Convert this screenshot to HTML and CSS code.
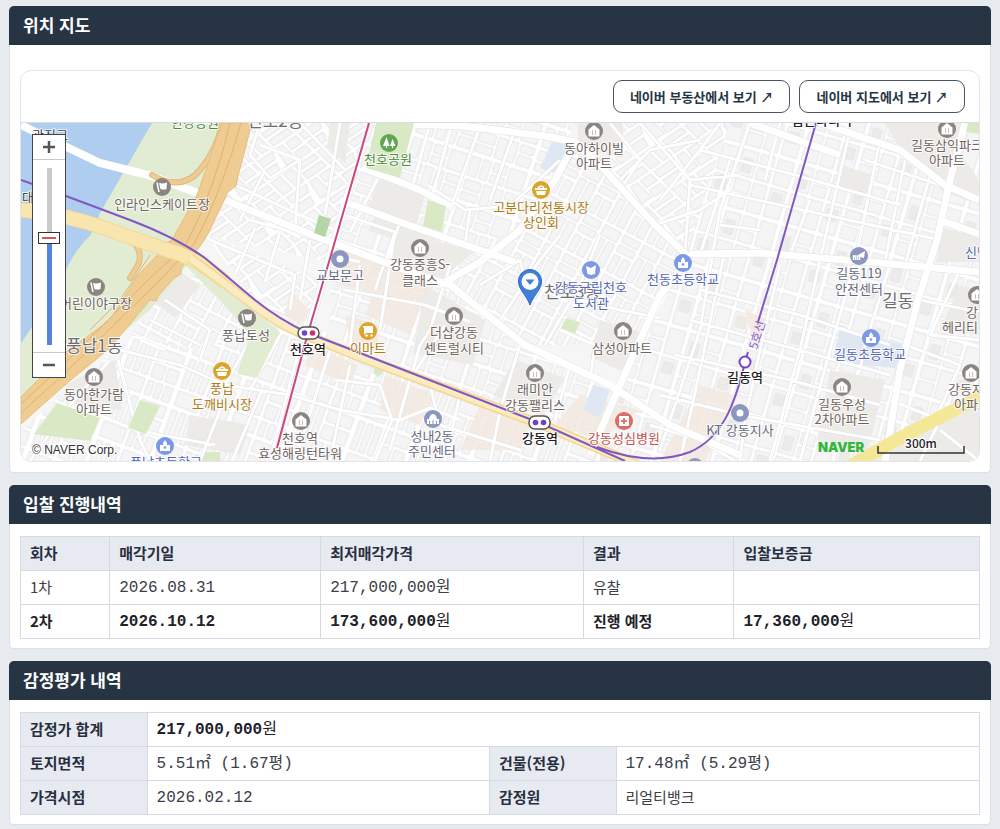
FILE: index.html
```html
<!DOCTYPE html>
<html lang="ko">
<head>
<meta charset="utf-8">
<meta name="viewport" content="width=device-width, initial-scale=1">
<title>위치 지도</title>
<link rel="stylesheet" href="styles.css">
</head>
<body>
<main class="page">
  <section class="panel">
    <h2 class="panel-title">위치 지도</h2>
    <div class="panel-body panel-body-map">
      <div class="map-card">
        <div class="map-bar">
          <a class="map-link" href="#land">네이버 부동산에서 보기 ↗</a>
          <a class="map-link" href="#map">네이버 지도에서 보기 ↗</a>
        </div>
        <div class="map">
          <svg class="map-canvas" viewBox="21 123 958 338" preserveAspectRatio="xMidYMid slice" role="img" aria-label="천호동 주변 지도">
            <defs>
              <pattern id="lots-a" width="62" height="50" patternUnits="userSpaceOnUse" patternTransform="rotate(18)">
                <rect class="gap" width="62" height="50"/>
                <g class="lot"><path d="M2 2h9v20H2zM14 2h8v20h-8zM25 2h14v9H25zM25 14h14v8H25zM42 2h17v20H42zM2 26h17v10H2zM2 39h17v8H2zM22 26h9v21h-9zM34 26h8v21h-8zM45 26h14v8H45zM45 37h14v10H45z"/></g>
              </pattern>
              <pattern id="lots-b" width="58" height="64" patternUnits="userSpaceOnUse" patternTransform="rotate(16)">
                <rect class="gap" width="58" height="64"/>
                <g class="lot"><path d="M2 2h16v26H2zM21 2h14v12H21zM21 17h14v11H21zM39 2h16v26H39zM2 32h16v13H2zM2 48h16v13H2zM21 32h14v29H21zM39 32h16v29H39z"/><path class="lot-dark" d="M5 10h9v14H5zM42 36h10v11H42z"/></g>
              </pattern>
              <pattern id="lots-c" width="56" height="46" patternUnits="userSpaceOnUse" patternTransform="rotate(-34) skewX(12)">
                <rect class="gap" width="56" height="46"/>
                <g class="lot"><path d="M2 2h24l-4 8H2zM2 14h18l-3 9H2zM30 2h8v20H26zM42 2h12v9H41zM41 15h13v8H40zM2 27h11v17H2zM17 27h10v17H17zM31 27h23v6H31zM31 37h23v7H31z"/></g>
              </pattern>
              <pattern id="lots-d" width="44" height="44" patternUnits="userSpaceOnUse" patternTransform="rotate(-62)">
                <rect class="gap" width="44" height="44"/>
                <g class="lot"><path d="M2 2h18v7H2zM2 12h18v8H2zM24 2h7v18h-7zM34 2h8v18h-8zM2 24h26v7H2zM2 34h26v8H2zM31 24h11v18H31z"/></g>
              </pattern>
              <pattern id="lots-e" width="60" height="54" patternUnits="userSpaceOnUse" patternTransform="rotate(20)">
                <rect class="gap" width="60" height="54"/>
                <g class="lot"><path d="M2 2h6v30H2zM11 2h6v30h-6zM20 2h6v30h-6zM30 2h26v12H30zM30 18h12v14H30zM45 18h11v14H45zM2 36h24v15H2zM30 36h6v15h-6zM39 36h6v15h-6zM48 36h8v15h-8z"/></g>
              </pattern>
              <symbol id="i-home" viewBox="-10 -10 20 20"><circle r="9"/><path class="ic-w" d="M-5.500-1.500 0-6 5.500-1.500V5.500H-5.500z"/><path class="ic-k" d="M-1.500-1v5M1.500-1v5"/></symbol>
              <symbol id="i-flag" viewBox="-10 -10 20 20"><circle r="9"/><path class="ic-l" d="M-5-4.500 -3 5"/><path class="ic-w" d="M-3-4Q1-3 5-4.500L4.500 2Q1 3-1.500 2z"/></symbol>
              <symbol id="i-basket" viewBox="-10 -10 20 20"><circle r="9"/><path class="ic-l" d="M-3.500-1Q0-7 3.500-1"/><path class="ic-w" d="M-6-2H6V0H-6zM-5 1H5L4 5H-4z"/></symbol>
              <symbol id="i-tree" viewBox="-10 -10 20 20"><circle r="9"/><path class="ic-w" d="M-2.500-6-6 3h3v2h1V3H.5zM3.500-4 1 3h2v2h1V3h2.500z"/></symbol>
              <symbol id="i-book" viewBox="-10 -10 20 20"><circle r="9"/><path class="ic-w" d="M-5-4 0-2 5-5 4 4 0 5-3.500 4z"/></symbol>
              <symbol id="i-school" viewBox="-10 -10 20 20"><circle r="9"/><path class="ic-w" d="M0-6 2-3V-1H5V5H-5V-1H-2V-3z"/><circle r="1.300" cy="1.500"/></symbol>
              <symbol id="i-cart" viewBox="-10 -10 20 20"><circle r="9"/><path class="ic-w" d="M-5-5H5V2H-2L-4 4V-3.500H-5z"/><circle class="ic-w" cx="-1.500" cy="4.500" r="1.200"/><circle class="ic-w" cx="3.500" cy="4.500" r="1.200"/></symbol>
              <symbol id="i-dot" viewBox="-10 -10 20 20"><circle r="9"/><circle class="ic-w" r="3.500"/></symbol>
              <symbol id="i-cross" viewBox="-10 -10 20 20"><circle r="9"/><rect class="ic-w" x="-5" y="-5" width="10" height="10" rx="1"/><path class="ic-x" d="M0-3V3M-3 0H3"/></symbol>
              <symbol id="i-office" viewBox="-10 -10 20 20"><circle r="9"/><path class="ic-w" d="M-6 5V0H-4Q-3-5 0-5T4 0H6V5z"/><path class="ic-o" d="M-3.500 2v3M0 1v4M3.500 2v3"/></symbol>
              <symbol id="i-fire" viewBox="-10 -10 20 20"><circle r="9"/><path class="ic-l" d="M-5.500 4V0H-3.500V4M-1.500 4V0H.5V4"/><path class="ic-w" d="M-1-1 6-5 5 2 1 1z"/></symbol>
            </defs>

            <rect class="ground" x="21" y="123" width="958" height="338"/>

            <!-- street blocks -->
            <path fill="url(#lots-c)" d="M250 123H372L330 262 205 235z"/>
            <path fill="url(#lots-a)" d="M369 123H575L530 225 440 270 332 250z"/>
            <path fill="url(#lots-c)" d="M570 123H760L700 262 655 232z"/>
            <path fill="url(#lots-d)" d="M575 145 690 255 640 345 520 345 440 270 530 220z"/>
            <path fill="url(#lots-b)" d="M730 123H979V461H590L685 255z"/>
            <path fill="url(#lots-e)" d="M205 262 330 335 600 450V461H60L120 350z"/>
            <path fill="url(#lots-d)" d="M181 272 240 310 250 335 200 350 130 335z"/>
            <path fill="url(#lots-e)" d="M21 430 110 355 160 400 190 461H21z"/>
            <path fill="url(#lots-a)" d="M332 250 440 270 525 345 610 385 590 445 330 335z"/>
            <path fill="url(#lots-c)" d="M205 235 320 280 308 325 250 295z"/>

            <!-- land use -->
            <g class="lot-dark">
              <path d="M330 123h20l-5 40-18-16zM380 178l45 16-8 30-50-14zM375 215l62 22-8 12-60-18zM396 228l78 24-34 28-54-15z"/>
              <path d="M578 123h45v35l-45-12zM885 123h78l-16 60-50-40z"/>
              <path d="M955 145 979 180V205L940 190zM944 228 979 237V262H936zM844 166l30 9-5 18-30-7z"/>
              <path d="M425 285l60 35-12 45-60-12zM515 360l50 18-22 38-50-20zM600 320l40 12-16 40-34-15z"/>
              <path d="M170 265 200 285 175 318 152 300zM65 385 115 360 122 410 75 405zM190 415 250 425 240 455 185 445z"/>
              <path d="M830 370l55 10-18 75-50-15zM960 285 979 290V335L940 330zM908 425 979 392V461H870z"/>
            </g>
            <g class="lot-peach">
              <path d="M290 292 310 310 300 325 285 315zM345 248 405 270 395 300 340 285zM345 315 378 325 378 355 350 345z"/>
              <path d="M310 345 358 365 350 385 305 365zM385 265l45 20-20 50-45-20zM385 375 435 395 420 425 380 410zM580 395 640 410 600 440 555 425z"/>
              <path d="M700 385 735 395 705 461H660zM745 310 770 320 755 350zM480 405 530 425 520 450H460z"/>
            </g>
            <path class="lot-blue" d="M552 142 580 145 562 175 540 168zM593 385 610 390 600 418 583 410zM840 328 905 345 895 368 832 362z"/>

            <!-- streets -->
            <g class="street-edge">
              <path id="streets" d="M235 185 300 215 340 232M225 200 300 238M260 123 250 155 270 178 300 160 260 145M265 170 240 220M300 160 295 230M250 220 320 240M300 123 345 170M340 123 325 215M210 240 295 275 290 310M255 228 235 275M280 232 265 282M310 240 300 300M330 255 360 262M345 215 395 232 375 290M355 205 380 213M378 178 350 232M412 123 390 180M430 123 412 188M452 123 430 205M480 126 450 210M515 130 490 200M400 222 385 265M428 185 465 210 510 206 560 160M470 210 465 245 490 250M450 265 430 330 420 345M395 232 380 330M345 290 425 305 470 322M350 345 360 265M420 345 390 450M445 325 415 372M520 345 500 410M500 320 540 260 560 235M545 345 580 285 600 235M580 300 620 310 660 318M560 330 595 345 590 380M480 285 520 260 530 300M620 385 570 365M570 365 555 420M610 123 640 160 620 190M640 123 690 180 740 175M660 200 700 150 720 123M655 225 700 210 730 190M690 180 685 255M620 180 650 150 700 140M730 160 700 255M750 123 720 210 700 330 660 450M780 123 765 180M700 150 795 175 900 205M690 185 780 205 940 240M720 225 760 230M700 290 800 315 890 345M690 320 780 345 890 375M675 355 790 380 880 405M660 395 740 415 880 440M650 425 700 440 735 461M725 250 700 370 680 461M780 265 760 350 745 420 740 461M820 260 800 350 770 461M855 262 830 350 800 461M890 265 865 345 860 370M810 200 790 255M850 130 820 260M880 140 855 262M905 160 885 262M930 175 905 265M865 160 940 185M875 215 840 205M960 270 930 335 979 340M920 300 979 312M905 345 960 365 935 420M890 400 940 420 920 461M940 430 979 461M120 350 180 365 225 385 290 395M118 360 140 440 150 461M110 360 70 405 30 461M140 340 165 350M150 320 200 345M165 300 210 330 200 360M75 405 135 430 215 445M230 385 200 461M262 390 232 461M250 340 225 385M280 335 250 390M300 345 270 461M330 350 295 461M350 365 330 461M290 395 340 410 400 420 430 408 460 420M335 380 380 385 392 420 375 461M430 385 440 425 520 450M460 395 445 461M500 412 490 461"/>
            </g>
            <use class="street" href="#streets"/>
            <g class="road-edge">
              <path id="roads" d="M405 124 463 126 545 136 575 142 600 165 655 225 690 258M575 142 555 180 520 230 480 262 440 285M362 168 390 178 420 190 450 206M340 200 400 222 480 250 515 262M225 200 320 238 400 268 450 285 525 345 610 385 670 425 740 455M690 258 660 295 640 340 620 385 590 455M690 254 760 253 870 262 979 272M965 123 950 180 937 240 918 300 900 370 885 461M750 123 840 155M820 123 900 150 945 185 979 200M940 220 979 234M352 180 310 325"/>
            </g>
            <use class="road" href="#roads"/>

            <!-- river, banks and parks -->
            <path class="bank" d="M21 420V123H245L205 240 190 262 150 310 66 380z"/>
            <path class="water" d="M21 123H152L100 213 92 234Q76 248 66 270L50 300 30 330 21 343z"/>
            <path class="bank" d="M100 226Q88 232 91 238L105 242 115 232z"/>
            <path class="bank" d="M184 264 205 264 236 294 280 332 257 378 237 374 250 335 227 308z"/>
            <path class="park-soft" d="M376 123H414L400 178 366 168zM428 200 446 206 442 232 423 226z"/>
            <path class="park" d="M319 215 331 219 325 237 314 233z"/>
            <path class="park-soft" d="M57 403 100 418 90 441 34 434zM140 400 160 406 146 434 128 428zM566 318l14 4-5 12-14-6zM968 123H979V134L966 132zM375 365l10 4-6 8-6-4zM205 452h15v9h-18z"/>

            <!-- expressway -->
            <path class="bridge" d="M21 125 100 163 152 176 200 194"/>
            <path class="ramp-edge" d="M152 175Q182 192 200 170T222 123M118 230Q150 258 178 240M125 235Q145 248 138 265L130 278"/>
            <path class="ramp" d="M152 175Q182 192 200 170T222 123M118 230Q150 258 178 240M125 235Q145 248 138 265L130 278"/>
            <path class="express" d="M222 123H252L238 176 236 186 228 192 208 234 200 246 181 268 181 274 174 278 158 296 156 301 150 300 110 348 66 384 21 424V397L66 352 110 320 138 275 172 240 197 195z"/>
            <path class="express-line" d="M230 123Q215 190 185 246L150 278 66 362 21 404M241 123Q222 192 194 244L160 280 66 372 21 413M150 255 120 300 90 330"/>

            <!-- arterial roads -->
            <path class="artery-edge" d="M21 210Q66 214 110 230T180 254Q205 264 225 282"/>
            <path class="artery" d="M21 210Q66 214 110 230T180 254Q205 264 225 282"/>
            <path class="artery2-edge" d="M190 258Q225 284 255 306T308 336L360 357 540 424 640 466"/>
            <path class="artery2" d="M190 258Q225 284 255 306T308 336L360 357 540 424 640 466"/>
            <path class="artery3" d="M850 466 900 438 985 394"/>

            <!-- subway -->
            <path class="line5" d="M21 180 66 196 130 220Q175 237 205 258L255 300Q280 320 308 333L360 353 540 423 625 461M597 447Q650 467 690 452C722 438 735 405 745 362L748 352M758 322 777 260 816 123"/>
            <path class="line8" d="M369 123 331 255 308 333 277 448"/>
            <g class="station">
              <rect x="298" y="327" width="21" height="12" rx="6"/><rect x="529" y="416" width="21" height="13" rx="6"/>
            </g>
            <circle class="dot5" cx="304.500" cy="333" r="2.800"/><circle class="dot8" cx="312.500" cy="333" r="2.800"/>
            <circle class="dot5" cx="535.500" cy="422.500" r="2.800"/><circle class="dot5" cx="543.500" cy="422.500" r="2.800"/>
            <circle class="stop5" cx="745" cy="362" r="5.500"/>
            <text class="line-name" transform="translate(757 350) rotate(-73)">5호선</text>

            <!-- district names -->
            <g class="label district">
              <text x="247" y="127">천호2동</text><text x="66" y="352">풍납1동</text><text x="882" y="307">길동</text><text x="544" y="298">천호3동</text>
            </g>

            <!-- places -->
            <g class="c-gray">
              <use href="#i-flag" x="152" y="177" width="20" height="20"/><use href="#i-flag" x="86" y="277" width="20" height="20"/><use href="#i-flag" x="237" y="308" width="20" height="20"/>
              <use href="#i-home" x="84" y="367" width="20" height="20"/><use href="#i-home" x="291" y="411" width="20" height="20"/><use href="#i-home" x="410" y="238" width="20" height="20"/><use href="#i-home" x="444" y="306" width="20" height="20"/><use href="#i-home" x="525" y="363" width="20" height="20"/><use href="#i-home" x="613" y="321" width="20" height="20"/><use href="#i-home" x="584" y="121" width="20" height="20"/><use href="#i-home" x="937" y="119" width="20" height="20"/><use href="#i-home" x="967" y="285" width="20" height="20"/><use href="#i-home" x="961" y="363" width="20" height="20"/><use href="#i-home" x="832" y="377" width="20" height="20"/>
            </g>
            <g class="c-gold"><use href="#i-basket" x="212" y="361" width="20" height="20"/><use href="#i-basket" x="531" y="180" width="20" height="20"/><use href="#i-cart" x="358" y="321" width="20" height="20"/></g>
            <g class="c-green"><use href="#i-tree" x="379" y="133" width="20" height="20"/></g>
            <g class="c-blue"><use href="#i-book" x="581" y="260" width="20" height="20"/><use href="#i-school" x="673" y="253" width="20" height="20"/><use href="#i-school" x="861" y="328" width="20" height="20"/><use href="#i-school" x="155" y="436" width="20" height="20"/></g>
            <g class="c-slate"><use href="#i-dot" x="330" y="249" width="20" height="20"/><use href="#i-dot" x="730" y="403" width="20" height="20"/><use href="#i-office" x="423" y="409" width="20" height="20"/><use href="#i-fire" x="849" y="246" width="20" height="20"/><use href="#i-dot" x="685" y="457" width="20" height="20"/></g>
            <g class="c-red"><use href="#i-cross" x="614" y="411" width="20" height="20"/></g>

            <g class="label t-gray">
              <text x="162" y="209">인라인스케이트장</text><text x="96" y="308">어린이야구장</text><text x="246" y="340">풍납토성</text>
              <text x="94" y="399">동아한가람</text><text x="94" y="414">아파트</text>
              <text x="300" y="443">천호역</text><text x="300" y="458">효성해링턴타워</text>
              <text x="420" y="269">강동중흥S-</text><text x="420" y="285">클래스</text>
              <text x="454" y="337">더샵강동</text><text x="454" y="353">센트럴시티</text>
              <text x="535" y="394">래미안</text><text x="535" y="410">강동팰리스</text>
              <text x="622" y="353">삼성아파트</text>
              <text x="594" y="153">동아하이빌</text><text x="594" y="168">아파트</text>
              <text x="947" y="150">길동삼익파크</text><text x="947" y="165">아파트</text>
              <text x="978" y="317">강동</text><text x="972" y="332">헤리티지자</text>
              <text x="972" y="394">강동자이</text><text x="972" y="409">아파트</text>
              <text x="842" y="409">길동우성</text><text x="842" y="424">2차아파트</text>
            </g>
            <g class="label t-slate">
              <text x="340" y="280">교보문고</text><text x="432" y="441">성내2동</text><text x="432" y="456">주민센터</text>
              <text x="740" y="435">KT 강동지사</text><text x="859" y="278">길동119</text><text x="859" y="294">안전센터</text>
            </g>
            <g class="label t-blue">
              <text x="591" y="292">강동구립천호</text><text x="591" y="308">도서관</text><text x="683" y="284">천동초등학교</text><text x="870" y="359">길동초등학교</text><text x="166" y="467">풍납초등학교</text><text x="983" y="257">신명초</text>
            </g>
            <g class="label t-gold"><text x="541" y="212">고분다리전통시장</text><text x="541" y="227">상인회</text><text x="222" y="393">풍납</text><text x="222" y="409">도깨비시장</text><text x="368" y="353">이마트</text></g>
            <g class="label t-green"><text x="388" y="164">천호공원</text><text x="195" y="127">한강공원</text></g>
            <g class="label t-red"><text x="624" y="443">강동성심병원</text></g>
            <g class="label t-station"><text x="308" y="354">천호역</text><text x="540" y="443">강동역</text><text x="745" y="382">길동역</text><text x="822" y="125">굽은다리역</text></g>
            <g class="label t-dark"><text x="50" y="140">광진교</text><text x="28" y="202">대</text></g>

            <path class="pin" d="M530 305C526 294 518.500 290 518.500 281A11.500 11.500 0 0 1 541.500 281C541.500 290 534 294 530 305z"/>
            <circle class="pin-hole" cx="530" cy="281.500" r="8.500"/>
            <path class="pin-mark" d="M525.500 279.500h9l-4.500 5.500z"/>

            <text class="copyright" x="32" y="454">© NAVER Corp.</text>
            <text class="brand" x="818" y="452">NAVER</text>
            <text class="scale-text" x="921" y="448">300m</text>
            <path class="scale-line" d="M878 446V453H964V446"/>
          </svg>
          <div class="zoom">
            <button class="zoom-btn zoom-in" type="button" aria-label="확대"><svg viewBox="0 0 12 12"><path d="M0 6H12M6 0V12"/></svg></button>
            <input class="zoom-range" type="range" min="0" max="100" value="61" aria-label="지도 확대 수준">
            <button class="zoom-btn zoom-out" type="button" aria-label="축소"><svg viewBox="0 0 12 12"><path d="M0 6H12"/></svg></button>
          </div>
        </div>
      </div>
    </div>
  </section>

  <section class="panel">
    <h2 class="panel-title">입찰 진행내역</h2>
    <div class="panel-body">
      <table class="grid bids">
        <thead>
          <tr><th class="c-round" scope="col">회차</th><th class="c-date" scope="col">매각기일</th><th class="c-price" scope="col">최저매각가격</th><th class="c-result" scope="col">결과</th><th scope="col">입찰보증금</th></tr>
        </thead>
        <tbody>
          <tr><td>1차</td><td class="num">2026.08.31</td><td class="num">217,000,000<span class="unit">원</span></td><td>유찰</td><td></td></tr>
          <tr class="current"><td>2차</td><td class="num">2026.10.12</td><td class="num">173,600,000<span class="unit">원</span></td><td>진행 예정</td><td class="num">17,360,000<span class="unit">원</span></td></tr>
        </tbody>
      </table>
    </div>
  </section>

  <section class="panel">
    <h2 class="panel-title">감정평가 내역</h2>
    <div class="panel-body">
      <table class="grid appraisal">
        <colgroup><col class="c-key"><col class="c-value"><col class="c-key"><col></colgroup>
        <tbody>
          <tr><th scope="row">감정가 합계</th><td class="num total" colspan="3">217,000,000<span class="unit">원</span></td></tr>
          <tr><th scope="row">토지면적</th><td class="num">5.51㎡ (1.67평)</td><th scope="row">건물(전용)</th><td class="num">17.48㎡ (5.29평)</td></tr>
          <tr><th scope="row">가격시점</th><td class="num">2026.02.12</td><th scope="row">감정원</th><td>리얼티뱅크</td></tr>
        </tbody>
      </table>
    </div>
  </section>
</main>
</body>
</html>
```
FILE: styles.css
```css
* { box-sizing: border-box; }

body {
  margin: 0;
  background: #e7eaef;
  color: #3b4049;
  font: 15px/20px "Noto Sans CJK KR", "Noto Sans", sans-serif;
}

.page {
  display: flex;
  flex-direction: column;
  gap: 12px;
  padding: 6px 9px 4px;
}

.panel {
  background: #fff;
  border: 1px solid #dce0e7;
  border-top: 0;
  border-radius: 5px;
}

.panel-title {
  margin: 0 -1px;
  padding: 7px 14px 8px;
  background: #273444;
  border-radius: 5px 5px 0 0;
  color: #fff;
  font-size: 17px;
  font-weight: 700;
  line-height: 24px;
}

.panel-body { padding: 12px 10px 9px; }
.panel-body-map { padding: 25px 10px 10px; }

/* map card */
.map-card {
  overflow: hidden;
  border: 1px solid #e3e5ea;
  border-radius: 11px;
}

.map-bar {
  display: flex;
  flex-wrap: wrap;
  justify-content: flex-end;
  gap: 9px;
  padding: 9px 14px;
}

.map-link {
  padding: 6px 16px;
  border: 1px solid #4a5462;
  border-radius: 9px;
  color: #273444;
  font-size: 13px;
  font-weight: 700;
  line-height: 19px;
  text-decoration: none;
}

.map { position: relative; border-top: 1px solid #d9dbe0; }
.map-canvas { display: block; width: 100%; height: auto; }

/* zoom control over the map */
.zoom {
  position: absolute;
  top: 11px;
  left: 11px;
  display: flex;
  flex-direction: column;
  align-items: center;
  width: 34px;
  border: 1px solid #444;
  background: #fff;
}

.zoom-btn {
  display: grid;
  place-items: center;
  width: 100%;
  height: 25px;
  padding: 0;
  border: 0;
  background: #fff;
}

.zoom-in { border-bottom: 1px solid #c8c8c8; }
.zoom-out { border-top: 1px solid #c8c8c8; }
.zoom-btn svg { width: 12px; height: 12px; }
.zoom-btn path { stroke: #555; stroke-width: 2.5; }

.zoom-range {
  width: 22px;
  height: 177px;
  margin: 8px 0 7px;
  appearance: none;
  background: linear-gradient(#c9c9c9 40%, #5584dc 40%) center / 5px 100% no-repeat;
  writing-mode: vertical-lr;
  direction: rtl;
}

.zoom-range::-webkit-slider-thumb {
  width: 22px;
  height: 12px;
  appearance: none;
  border: 1px solid #333;
  background: linear-gradient(#d9555a, #d9555a) center / 14px 2px no-repeat #fff;
}

/* map drawing */
.ground { fill: #f6f6f6; }
.gap { fill: #fff; }
.lot { fill: #f5f5f6; stroke: #e6e6e8; stroke-width: 1; }
.lot-dark { fill: #edebe8; }
.lot-peach { fill: #f3e9df; opacity: .8; }
.lot-blue { fill: #dfe7f3; }
.street-edge, .road-edge, .street, .road { fill: none; stroke-linejoin: round; }
.street-edge { stroke: #e0e0e2; stroke-width: 4; }
.street { stroke: #fff; stroke-width: 3; }
.road-edge { stroke: #e2e2e3; stroke-width: 8; }
.road { stroke: #fff; stroke-width: 7; }
.bank { fill: #e1ecd3; }
.water { fill: #afcdee; }
.park { fill: #b4d6a4; }
.park-soft { fill: #d9e9c6; }
.bridge, .ramp, .ramp-edge, .express-line, .artery, .artery-edge, .artery2, .artery2-edge, .artery3 { fill: none; }
.bridge { stroke: #fff; stroke-width: 8; }
.ramp-edge { stroke: #e3b87b; stroke-width: 6; stroke-linecap: round; }
.ramp { stroke: #edcb92; stroke-width: 4; stroke-linecap: round; }
.express { fill: #efcc92; stroke: #e8bd7c; }
.express-line { stroke: #e2b170; stroke-width: 1; }
.artery-edge { stroke: #f0da9b; stroke-width: 15; }
.artery { stroke: #f8e6ae; stroke-width: 13; }
.artery2-edge { stroke: #f5d795; stroke-width: 10; }
.artery2 { stroke: #faebc0; stroke-width: 7; }
.artery3 { stroke: #f5e798; stroke-width: 13; }
.line5, .line8 { fill: none; stroke-width: 2; }
.line5 { stroke: #8058c4; }
.line8 { stroke: #c94880; }
.station { fill: #fff; stroke: #555; stroke-width: 1.5; }
.dot5 { fill: #7040c8; }
.dot8 { fill: #d0306c; }
.stop5 { fill: #fff; stroke: #7a3fd0; stroke-width: 2; }
.line-name { fill: #8a5bd0; font-size: 12px; }

.label {
  font-size: 13px;
  text-anchor: middle;
  paint-order: stroke;
  stroke: #fff;
  stroke-width: 2;
  stroke-opacity: .8;
  stroke-linejoin: round;
}
.district { fill: #6d6d72; font-size: 17px; text-anchor: start; }
.t-gray { fill: #6e655f; }
.t-slate { fill: #666b80; }
.t-blue { fill: #5468b4; }
.t-gold { fill: #ad7a12; }
.t-green { fill: #4e8a3f; }
.t-red { fill: #c4524d; }
.t-station { fill: #222; font-weight: 500; }
.t-dark { fill: #444; }

.c-gray { fill: #8a8580; }
.c-gold { fill: #dba52b; }
.c-green { fill: #62a653; }
.c-blue { fill: #7c98e6; }
.c-slate { fill: #8b97bd; }
.c-red { fill: #dc6c64; }
.ic-w { fill: #fff; }
.ic-l { fill: none; stroke: #fff; stroke-width: 1.5; }
.ic-k { stroke: #c4c0bc; }
.ic-o { stroke: #8b97bd; }
.ic-x { fill: none; stroke: #d0605a; stroke-width: 1.5; }

.pin { fill: #3f7fd9; stroke: #2f6bc4; }
.pin-hole { fill: #fff; }
.pin-mark { fill: #3f7fd9; }

.copyright { fill: #333; font: 12px "Liberation Sans", sans-serif; paint-order: stroke; stroke: #fff; stroke-width: 2; }
.brand { fill: #32b63e; font: 900 13px Inter, sans-serif; }
.scale-text { fill: #222; font-size: 12px; font-weight: 500; text-anchor: middle; paint-order: stroke; stroke: #fff; stroke-width: 2; }
.scale-line { fill: none; stroke: #333; stroke-width: 1.5; }

/* tables */
.grid {
  width: 100%;
  border-collapse: collapse;
  table-layout: fixed;
}

.grid th, .grid td {
  height: 34px;
  padding: 5px 9px 7px;
  border: 1px solid #d5d9e1;
  text-align: left;
}

.grid th {
  background: #e7eaf0;
  color: #273040;
  font-weight: 700;
}

.grid .num {
  padding: 6px 9px;
  font-family: "Liberation Mono", "Noto Sans CJK KR", monospace;
  font-size: 16px;
}
.current td, .grid .total { color: #1e222a; font-weight: 700; }
.grid .unit { font-weight: 400; }

.c-round { width: 9.3%; }
.c-date { width: 22%; }
.c-price { width: 27.4%; }
.c-result { width: 15.7%; }
.c-key { width: 13.2%; }
.c-value { width: 35.7%; }

@media (max-width: 640px) {
  .panel-body { overflow-x: auto; }
  .grid { min-width: 620px; }
}
```
